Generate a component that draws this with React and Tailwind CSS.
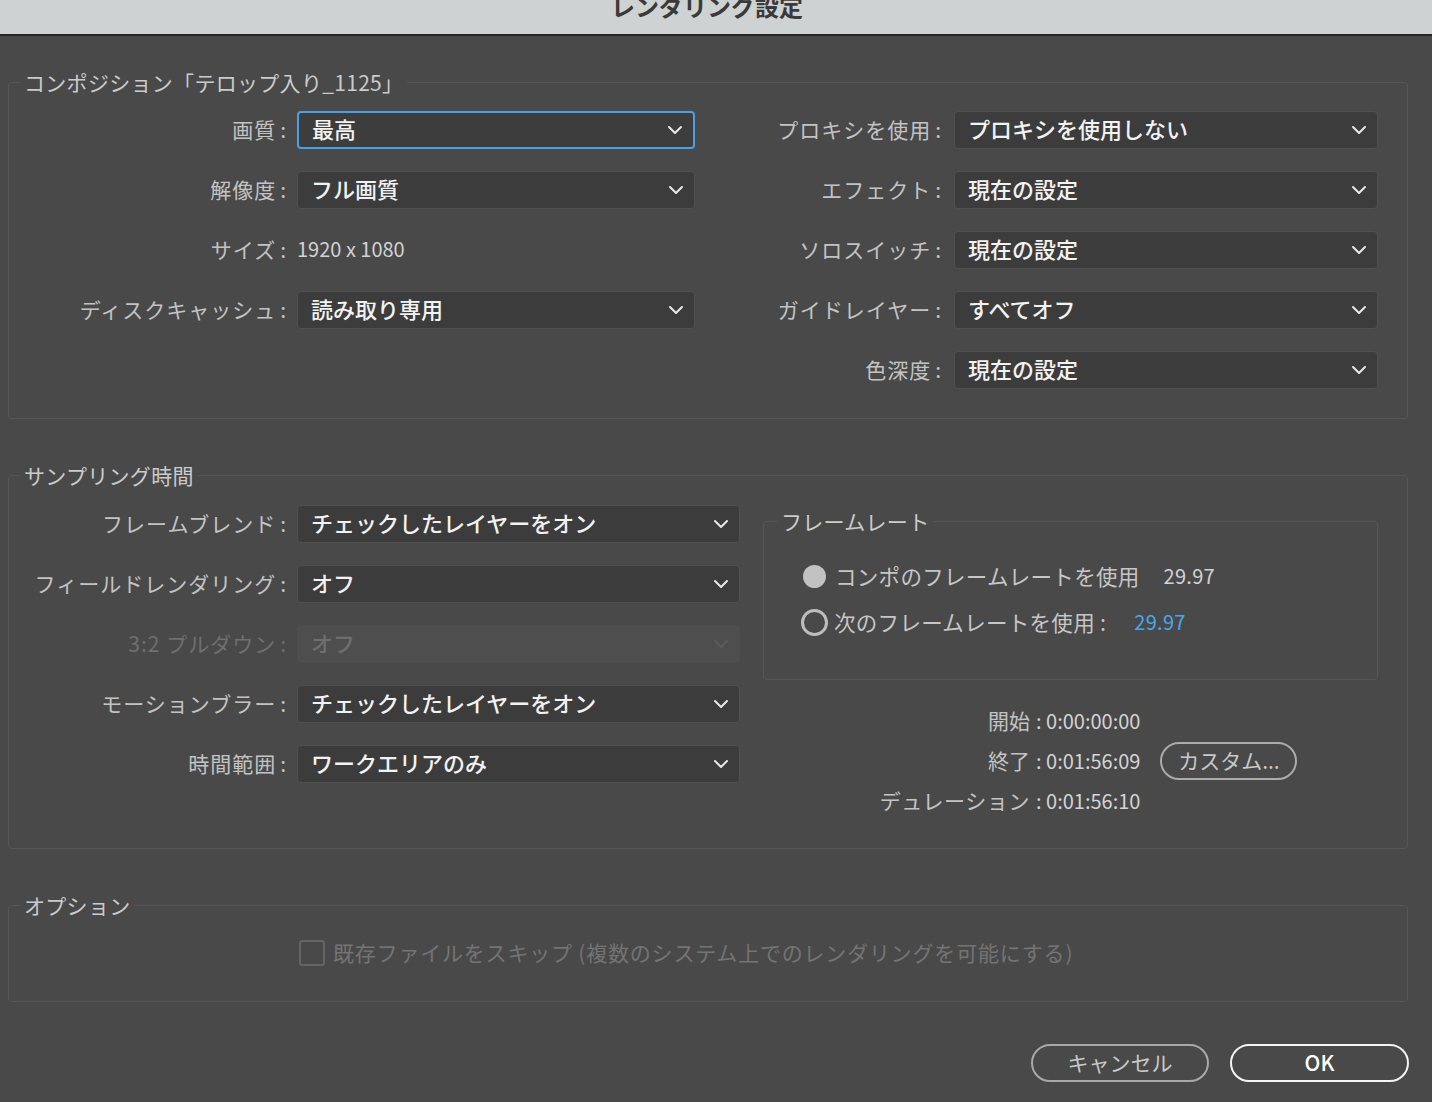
import React from 'react'

const Chevron = ({ disabled }) => (
  <svg width="16" height="10" viewBox="0 0 16 10" className="shrink-0">
    <polyline
      points="2,2 8,8 14,2"
      fill="none"
      stroke={disabled ? '#5c5c5c' : '#e8e8e8'}
      strokeWidth="2"
      strokeLinecap="round"
      strokeLinejoin="round"
    />
  </svg>
)

const Select = ({ value, className = '', focused, disabled }) => (
  <div
    className={`flex h-[38px] items-center justify-between rounded-[4px] pl-[13px] pr-[10px] text-[22px] ${
      focused
        ? 'border-2 border-[#4b9fe3] bg-[#3d3d3d] text-[#f2f2f2]'
        : disabled
          ? 'border border-[#4d4d4d] bg-[#4e4e4e] text-[#6e6e6e]'
          : 'border border-[#505050] bg-[#3c3c3c] text-[#f2f2f2]'
    } ${className}`}
  >
    <span className="pb-[4px] font-medium leading-none">{value}</span>
    <Chevron disabled={disabled} />
  </div>
)

const Label = ({ text, className = '', disabled }) => (
  <div
    className={`flex shrink-0 items-center justify-end text-[21px] tracking-[1px] ${
      disabled ? 'text-[#6f6f6f]' : 'text-[#c3c3c3]'
    } ${className}`}
  >
    <span>{text}</span>
    <span className="ml-[4px]">:</span>
  </div>
)

const Legend = ({ children, className = '' }) => (
  <legend className={`px-[4px] text-[21px] leading-[26px] tracking-[0.3px] text-[#cbcbcb] ${className}`}>
    {children}
  </legend>
)

const compLeft = [
  { label: '画質', value: '最高', focused: true },
  { label: '解像度', value: 'フル画質' },
  { label: 'サイズ', text: '1920 x 1080' },
  { label: 'ディスクキャッシュ', value: '読み取り専用' },
]

const compRight = [
  { label: 'プロキシを使用', value: 'プロキシを使用しない' },
  { label: 'エフェクト', value: '現在の設定' },
  { label: 'ソロスイッチ', value: '現在の設定' },
  { label: 'ガイドレイヤー', value: 'すべてオフ' },
  { label: '色深度', value: '現在の設定' },
]

const sampling = [
  { label: 'フレームブレンド', value: 'チェックしたレイヤーをオン' },
  { label: 'フィールドレンダリング', value: 'オフ' },
  { label: '3:2 プルダウン', value: 'オフ', disabled: true },
  { label: 'モーションブラー', value: 'チェックしたレイヤーをオン' },
  { label: '時間範囲', value: 'ワークエリアのみ' },
]

export default function App() {
  return (
    <div className="min-h-[1102px] w-full bg-[#494949] font-['Noto_Sans_CJK_JP','Noto_Sans',sans-serif]">
      {/* title bar */}
      <div className="flex h-[36px] justify-center overflow-hidden border-b-2 border-[#262626] bg-[#cfd2d2] pr-[18px]">
        <span className="-mt-[6px] text-[24px] font-bold leading-[24px] text-[#3a3a3a]">レンダリング設定</span>
      </div>

      <div className="pl-[8px] pr-[24px]">
        {/* composition */}
        <fieldset className="mt-[33px] rounded-[4px] border border-[#565656] pb-[29px] pt-[16px]">
          <Legend className="ml-[11px]">コンポジション「テロップ入り_1125」</Legend>
          <div className="flex">
            <div className="flex w-[686px] flex-col gap-[22px]">
              {compLeft.map((r) => (
                <div key={r.label} className="flex h-[38px] items-center">
                  <Label text={r.label} className="w-[278px]" />
                  {r.text ? (
                    <span className="ml-[10px] pb-[2px] text-[20px] text-[#d2d2d2]">{r.text}</span>
                  ) : (
                    <Select value={r.value} focused={r.focused} className="ml-[10px] w-[398px]" />
                  )}
                </div>
              ))}
            </div>
            <div className="flex flex-col gap-[22px]">
              {compRight.map((r) => (
                <div key={r.label} className="flex h-[38px] items-center">
                  <Label text={r.label} className="w-[247px]" />
                  <Select value={r.value} className="ml-[12px] w-[424px]" />
                </div>
              ))}
            </div>
          </div>
        </fieldset>

        {/* sampling */}
        <fieldset className="mt-[43px] rounded-[4px] border border-[#565656] pb-[27px] pt-[17px]">
          <Legend className="ml-[11px]">サンプリング時間</Legend>
          <div className="flex items-start">
            <div className="flex flex-col gap-[22px]">
              {sampling.map((r) => (
                <div key={r.label} className="flex h-[38px] items-center">
                  <Label text={r.label} disabled={r.disabled} className="w-[278px]" />
                  <Select value={r.value} disabled={r.disabled} className="ml-[10px] w-[443px]" />
                </div>
              ))}
            </div>

            <div className="ml-[23px] mt-[3px] flex w-[615px] flex-col">
              <fieldset className="rounded-[4px] border border-[#565656] pb-[43px] pt-[28px]">
                <Legend className="ml-[13px]">フレームレート</Legend>
                <div className="flex flex-col gap-[18px] pl-[37px] text-[21.5px] tracking-[0.3px] text-[#c6c6c6]">
                  <div className="flex h-[28px] items-center">
                    <span className="ml-[2px] h-[23px] w-[23px] rounded-full bg-[#c2c2c2]" />
                    <span className="ml-[9px]">コンポのフレームレートを使用</span>
                    <span className="ml-[24px] text-[20px] text-[#d2d2d2]">29.97</span>
                  </div>
                  <div className="flex h-[28px] items-center">
                    <span className="h-[27px] w-[27px] rounded-full border-[3px] border-[#bdbdbd]" />
                    <span className="ml-[6px]">次のフレームレートを使用</span>
                    <span className="ml-[5px]">:</span>
                    <span className="ml-[28px] text-[20px] text-[#4aa6ea]">29.97</span>
                  </div>
                </div>
              </fieldset>

              <div className="mt-[21px] flex flex-col text-[20px]">
                <div className="flex h-[40px] items-center">
                  <span className="w-[267px] text-right text-[21px] text-[#c3c3c3]">開始</span>
                  <span className="ml-[6px] text-[#d4d4d4]">: 0:00:00:00</span>
                </div>
                <div className="flex h-[40px] items-center">
                  <span className="w-[267px] text-right text-[21px] text-[#c3c3c3]">終了</span>
                  <span className="ml-[6px] text-[#d4d4d4]">: 0:01:56:09</span>
                  <button className="ml-[20px] flex h-[38px] w-[137px] items-center justify-center rounded-full border-2 border-[#ababab] text-[21px] text-[#c8c8c8]">
                    カスタム...
                  </button>
                </div>
                <div className="flex h-[40px] items-center">
                  <span className="w-[267px] text-right text-[21px] tracking-[0.6px] text-[#c3c3c3]">デュレーション</span>
                  <span className="ml-[6px] text-[#d4d4d4]">: 0:01:56:10</span>
                </div>
              </div>
            </div>
          </div>
        </fieldset>

        {/* options */}
        <fieldset className="mt-[43px] rounded-[4px] border border-[#565656] pb-[34px] pt-[21px]">
          <Legend className="ml-[11px]">オプション</Legend>
          <div className="ml-[290px] flex h-[28px] items-center">
            <span className="h-[26px] w-[26px] rounded-[3px] border-2 border-[#656565]" />
            <span className="ml-[8px] text-[21px] tracking-[0.8px] text-[#747474]">
              既存ファイルをスキップ (複数のシステム上でのレンダリングを可能にする)
            </span>
          </div>
        </fieldset>
      </div>

      {/* buttons */}
      <div className="mt-[42px] flex justify-end gap-[21px] pr-[23px]">
        <button className="h-[38px] w-[178px] rounded-full border-2 border-[#a9a9a9] text-[21px] text-[#c8c8c8]">
          キャンセル
        </button>
        <button className="h-[38px] w-[179px] rounded-full border-2 border-[#f4f4f4] text-[21px] font-medium text-white">
          OK
        </button>
      </div>
    </div>
  )
}
